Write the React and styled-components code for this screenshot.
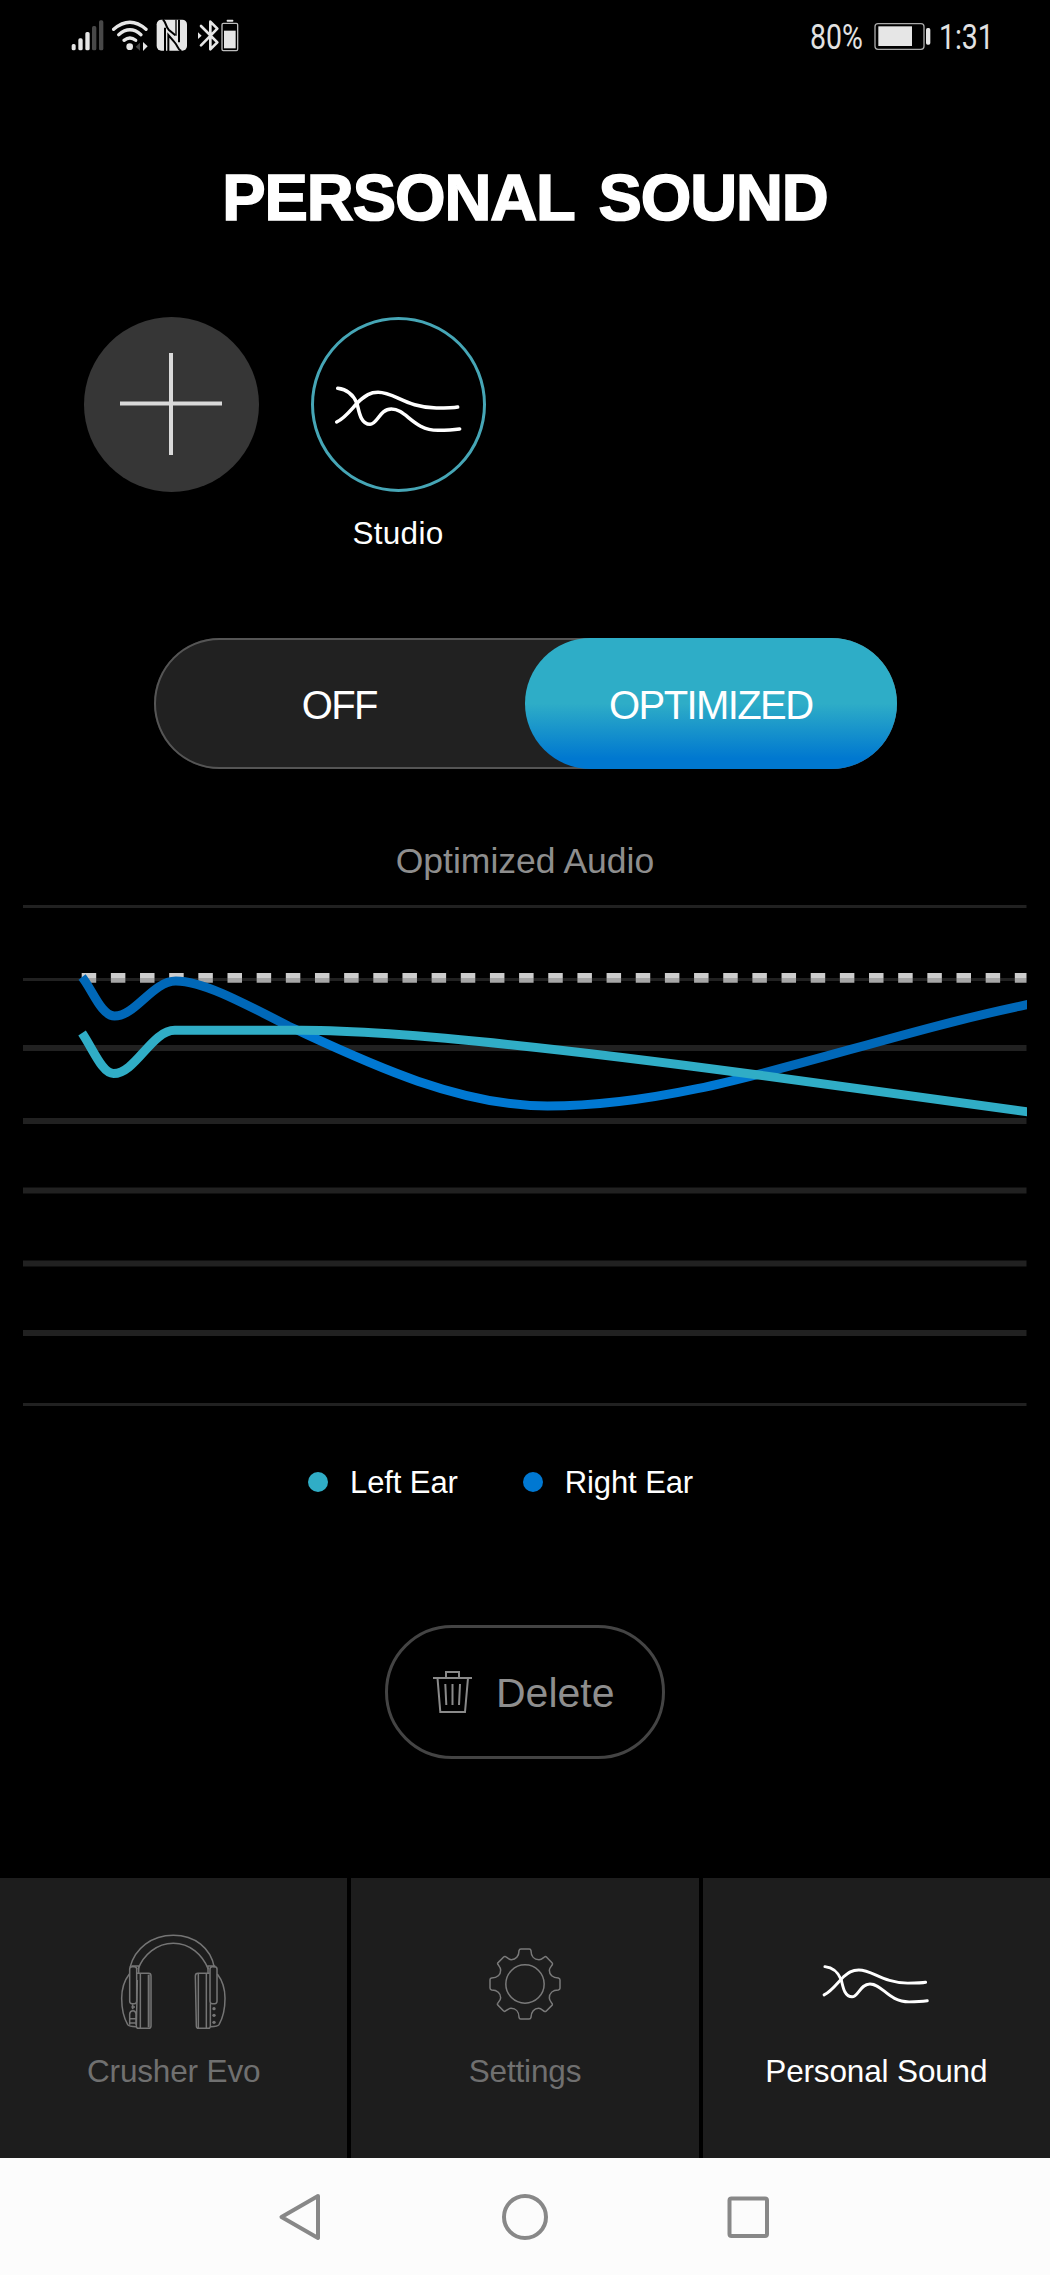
import React, { useState } from "react";
import styled, { createGlobalStyle } from "styled-components";

const GlobalStyle = createGlobalStyle`
  * {
    box-sizing: border-box;
  }
  body {
    margin: 0;
    background: #000;
    font-family: "Liberation Sans", Arial, sans-serif;
  }
  button {
    font-family: inherit;
    padding: 0;
    cursor: pointer;
  }
  svg {
    display: block;
    flex-shrink: 0;
  }
`;

const Screen = styled.div`
  width: 1050px;
  height: 2275px;
  display: flex;
  flex-direction: column;
  background: #000;
  color: #fff;
  overflow: hidden;
`;

const StatusBar = styled.header`
  height: 162px;
  padding: 18px 0 0 70px;
  display: flex;
  align-items: flex-start;
  justify-content: space-between;
`;

const StatusRight = styled.div`
  width: 240px;
  display: flex;
  align-items: flex-start;
  svg {
    margin: 4px 8px 0 0;
  }
`;

const StatusText = styled.span`
  width: ${(props) => props.$width}px;
  font-family: Roboto, sans-serif;
  font-size: 34.7px;
  line-height: 38px;
  color: #e2e2e2;
  white-space: nowrap;
  transform: scaleX(0.82);
  transform-origin: left center;
`;

const Title = styled.h1`
  margin: 0;
  text-align: center;
  font-size: 65px;
  line-height: 72px;
  font-weight: 700;
  letter-spacing: -1.1px;
  word-spacing: 8px;
  -webkit-text-stroke: 1.6px #fff;
`;

const Profiles = styled.section`
  display: flex;
  gap: 52px;
  height: 404px;
  padding: 83px 0 0 83.5px;
`;

const Profile = styled.div`
  display: flex;
  flex-direction: column;
  align-items: center;
  width: 175px;
`;

const ProfileCircle = styled.button`
  width: 175px;
  height: 175px;
  display: flex;
  align-items: center;
  justify-content: center;
  border-radius: 50%;
  border: ${(props) => (props.$selected ? "3px solid #46a6b6" : "none")};
  background: ${(props) => (props.$selected ? "#000" : "#363636")};
  padding: ${(props) => (props.$selected ? "8px 0 0 1px" : "0 1px 1px 0")};
`;

const ProfileName = styled.span`
  margin-top: 23px;
  font-size: 31.5px;
  line-height: 36px;
  letter-spacing: 0.3px;
`;

const Toggle = styled.div`
  width: 743px;
  height: 131px;
  margin: 0 auto;
  display: flex;
  border-radius: 66px;
  background: #212121;
  box-shadow: inset 0 0 0 2px #555;
`;

const ToggleOption = styled.button`
  flex: 1;
  border: none;
  border-radius: 66px;
  padding-top: 3px;
  color: #fff;
  font-size: 40px;
  letter-spacing: -1.6px;
  background: ${(props) =>
    props.$active
      ? "linear-gradient(#2eadc7 0%, #2eadc7 50%, #0078d0 92%, #0078d0 100%)"
      : "transparent"};
`;

const ChartSection = styled.section`
  margin-top: 71px;
  padding: 0 23px;
`;

const ChartTitle = styled.h2`
  margin: 0;
  height: 65px;
  text-align: center;
  font-size: 35.5px;
  line-height: 43px;
  font-weight: 400;
  color: #8e8e8e;
`;

const Legend = styled.div`
  display: flex;
  gap: 65px;
  padding: 59px 0 0 285px;
`;

const LegendItem = styled.div`
  display: flex;
  align-items: center;
  gap: 22px;
  font-size: 31px;
  line-height: 36px;
  letter-spacing: -0.1px;
  &::before {
    content: "";
    width: 20px;
    height: 20px;
    margin-bottom: 3px;
    border-radius: 50%;
    background: ${(props) => props.$color};
  }
`;

const DeleteButton = styled.button`
  width: 280px;
  height: 134px;
  margin: 124px auto 0;
  display: flex;
  align-items: center;
  gap: 24px;
  padding-left: 45px;
  border: 3px solid #444;
  border-radius: 67px;
  background: #000;
  color: #8e8e8e;
  font-size: 41px;
  line-height: 46px;
  span {
    padding-top: 2px;
  }
`;

const TabBar = styled.nav`
  margin-top: auto;
  height: 280px;
  flex-shrink: 0;
  display: grid;
  grid-template-columns: repeat(3, 1fr);
  gap: 4px;
`;

const Tab = styled.button`
  display: flex;
  flex-direction: column;
  align-items: center;
  padding-top: 56px;
  border: none;
  background: #1d1d1d;
  color: ${(props) => (props.$active ? "#fff" : "#707070")};
  font-size: 31.5px;
  line-height: 36px;
  letter-spacing: -0.15px;
`;

const TabIcon = styled.div`
  height: 100px;
  margin-bottom: 19px;
  display: flex;
  align-items: center;
`;

const SystemNav = styled.footer`
  height: 117px;
  flex-shrink: 0;
  display: flex;
  align-items: center;
  justify-content: center;
  gap: 176px;
  background: #fcfcfc;
`;

const SignalIcons = () => (
  <svg width="170" height="35" viewBox="60 55 510 105" fill="#e6e6e6">
    {/* signal */}
    <rect x="65" y="133" width="12" height="19" rx="5" />
    <rect x="85" y="116" width="13" height="36" rx="5" />
    <rect x="106" y="97" width="13" height="55" rx="5" />
    <rect x="126" y="79" width="13" height="73" rx="5" fill="#484848" />
    <rect x="147" y="62" width="13" height="90" rx="5" fill="#484848" />
    {/* wifi */}
    <g fill="none" stroke="#e6e6e6" strokeWidth="10" strokeLinecap="round">
      <path d="M191 89Q240 47 288 89" />
      <path d="M206 105Q240 76 273 105" />
      <path d="M222 122Q240 108 257 122" />
    </g>
    <circle cx="239" cy="141" r="10" />
    <path d="M257 141L270 129V153Z" fill="#444" />
    <path d="M279 127L293 140L279 154Z" />
    {/* nfc */}
    <rect x="320" y="60" width="91" height="93" rx="14" />
    <g fill="none" stroke="#000">
      <path d="M345 154V84" strokeWidth="6" />
      <path d="M338 60C347 62 345 78 356 90L376 107" strokeWidth="6" />
      <path d="M378 60V108" strokeWidth="4" />
      <path d="M387 60V128" strokeWidth="6" />
      <path d="M355 154V106L374 128C384 138 382 150 394 154" strokeWidth="6" />
    </g>
    {/* bluetooth */}
    <path
      d="M453 79L502 128L481 149V66L502 87L453 137"
      fill="none"
      stroke="#e6e6e6"
      strokeWidth="8"
      strokeLinecap="round"
      strokeLinejoin="round"
    />
    <path d="M444 98L455 108L444 118Z" />
    <rect
      x="516"
      y="71"
      width="47"
      height="82"
      rx="4"
      fill="none"
      stroke="#bdbdbd"
      strokeWidth="4"
    />
    <rect x="530" y="60" width="20" height="6" rx="2" />
    <rect x="522" y="93" width="35" height="53" />
  </svg>
);

const BatteryIcon = () => (
  <svg width="57" height="29" viewBox="278 66 171 87" fill="#e6e6e6">
    <rect
      x="281"
      y="71"
      width="147"
      height="77"
      rx="9"
      fill="none"
      stroke="#a8a8a8"
      strokeWidth="4"
    />
    <rect x="291" y="79" width="101" height="59" />
    <rect x="434" y="84" width="13" height="50" rx="5" />
  </svg>
);

const PlusIcon = () => (
  <svg width="102" height="102" viewBox="0 0 102 102" fill="#dadada">
    <rect x="0" y="48.5" width="102" height="4" />
    <rect x="49" y="0" width="4" height="102" />
  </svg>
);

const WavesIcon = ({ width = 131.7, strokeWidth = 10.5 }) => (
  <svg
    width={width}
    height={(width * 150) / 395}
    viewBox="820 250 395 150"
    fill="none"
    stroke="#fff"
    strokeWidth={strokeWidth}
    strokeLinecap="round"
  >
    <path d="M834 263C862 266 882 285 892 309C898 330 902 371 931 371C953 371 960 325 995 325C1040 325 1060 389 1135 389C1165 389 1180 388 1200 385" />
    <path d="M831 364C860 350 880 318 900 300C918 285 930 275 955 275C1005 275 1040 321 1130 322C1160 322 1180 322 1194 319" />
  </svg>
);

const TrashIcon = () => (
  <svg
    width="39"
    height="42"
    viewBox="0 0 39 42"
    fill="none"
    stroke="#8a8a8a"
    strokeWidth="2"
  >
    <path d="M0 7H39M13 7V1H26V7" />
    <path d="M4.5 7L7.3 41H32L35 7" />
    <path d="M12.3 13L13.3 34M19.5 13V34M27 13L26 34" />
  </svg>
);

const HeadphonesIcon = () => (
  <svg
    width="106.7"
    height="100"
    viewBox="360 222 320 300"
    fill="none"
    stroke="#757575"
    strokeWidth="4.5"
  >
    <path d="M390 322C405 265 455 226 520 226S632 265 643 322" />
    <path d="M414 328C430 285 470 250 520 250S608 285 625 328" />
    <path d="M394 318H416V340M646 318H624V340" />
    <rect x="389" y="320" width="21" height="111" rx="7" />
    <rect x="630" y="320" width="21" height="111" rx="7" />
    {/* ear cups */}
    <path d="M388 342C371 364 365 386 365 415C365 450 372 475 383 494Q387 500 408 500" />
    <path d="M652 342C669 364 675 386 675 415C675 450 668 475 657 494Q653 500 632 500" />
    <path d="M411 340H446Q453 340 453 348V498Q453 505 446 505H415Q409 505 409 498L412 360" />
    <path d="M629 340H594Q586 340 586 348L589 498Q589 505 596 505H625Q631 505 631 498V430" />
    <path d="M421 341V504M595 341V504M619 341V504" />
    <path d="M446 344V502" strokeWidth="6" />
    {/* buttons */}
    <path d="M398 433V448M394 441H405" strokeWidth="5" />
    <path d="M389 494V462Q390 452 399 452Q407 452 408 462V494M389 476H408M391 489H408" />
    <g fill="#757575" stroke="none">
      <circle cx="642" cy="446" r="5" />
      <circle cx="642" cy="466" r="5" />
      <circle cx="642" cy="487" r="5" />
    </g>
  </svg>
);

const GearIcon = () => (
  <svg
    width="74"
    height="74"
    viewBox="-111 -111 222 222"
    fill="none"
    stroke="#7a7a7a"
    strokeWidth="4.5"
  >
    <circle r="57.5" />
    {[0, 90, 180, 270].map((angle) => (
      <path
        key={angle}
        transform={`rotate(${angle})`}
        d="M0 -105H13Q17 -105 18 -100C18 -83 28 -73 42 -73C50 -73 55 -79 60 -82Q63 -83 65 -80L81 -64Q84 -61 82 -58C79 -53 73 -48 73 -41C73 -28 83 -18 100 -18Q105 -17 105 -12V0"
      />
    ))}
  </svg>
);

// vertical position and thickness of every grid line
const gridLines = [
  [1.5, 3],
  [74.5, 3],
  [143, 6],
  [216, 6],
  [285.5, 6],
  [358.5, 6],
  [428, 6],
  [499.5, 3],
];

const Chart = () => (
  <svg width="1003.5" height="501" viewBox="0 0 1003.5 501" fill="none">
    <defs>
      <linearGradient
        id="rightEar"
        gradientUnits="userSpaceOnUse"
        x1="0"
        y1="0"
        x2="1000"
        y2="0"
      >
        <stop offset="0.29" stopColor="#0068b8" />
        <stop offset="0.3" stopColor="#0078d2" />
        <stop offset="0.75" stopColor="#0078d2" />
        <stop offset="0.76" stopColor="#0068b8" />
      </linearGradient>
    </defs>
    {gridLines.map(([y, size]) => (
      <path key={y} d={`M0 ${y}H1003.5`} stroke="#212121" strokeWidth={size} />
    ))}
    <g strokeDasharray="14.5 14.66">
      <path d="M58.7 70.5H1003.5" stroke="#cdcdcd" strokeWidth="5" />
      <path d="M58.7 75.3H1003.5" stroke="#a6a6a6" strokeWidth="4.8" />
    </g>
    <g
      transform="translate(-23 -905) scale(1.0045 1)"
      strokeWidth="9"
    >
      <path
        stroke="url(#rightEar)"
        d="M81.7 977C92 990 101 1016 114 1016C135 1016 152 981 175 981C200 981 235 999 287 1026C350 1055 450 1106 545 1106C700 1106 850 1040 1028 1003.5"
      />
      <path
        stroke="#30adc6"
        d="M81.7 1033C93 1050 102 1073.5 113 1073.5C135 1073.5 151 1030.3 174 1030.3H300C400 1030.3 600 1054 755 1075C850 1088 940 1101 1028 1112.5"
      />
    </g>
  </svg>
);

const tabs = [
  { name: "Crusher Evo", icon: <HeadphonesIcon /> },
  { name: "Settings", icon: <GearIcon /> },
  {
    name: "Personal Sound",
    icon: <WavesIcon width={110.5} strokeWidth={10.5} />,
  },
];

const App = () => {
  const [mode, setMode] = useState("OPTIMIZED");
  const [tab, setTab] = useState("Personal Sound");

  return (
    <>
      <GlobalStyle />
      <Screen>
        <StatusBar>
          <SignalIcons />
          <StatusRight>
            <StatusText $width={64}>80%</StatusText>
            <BatteryIcon />
            <StatusText $width={70}>1:31</StatusText>
          </StatusRight>
        </StatusBar>

        <Title>PERSONAL SOUND</Title>

        <Profiles>
          <Profile>
            <ProfileCircle aria-label="Add profile">
              <PlusIcon />
            </ProfileCircle>
          </Profile>
          <Profile>
            <ProfileCircle $selected aria-label="Studio profile">
              <WavesIcon />
            </ProfileCircle>
            <ProfileName>Studio</ProfileName>
          </Profile>
        </Profiles>

        <Toggle>
          {["OFF", "OPTIMIZED"].map((item) => (
            <ToggleOption
              key={item}
              $active={mode === item}
              onClick={() => setMode(item)}
            >
              {item}
            </ToggleOption>
          ))}
        </Toggle>

        <ChartSection>
          <ChartTitle>Optimized Audio</ChartTitle>
          <Chart />
          <Legend>
            <LegendItem $color="#30adc6">Left Ear</LegendItem>
            <LegendItem $color="#0078d2">Right Ear</LegendItem>
          </Legend>
        </ChartSection>

        <DeleteButton>
          <TrashIcon />
          <span>Delete</span>
        </DeleteButton>

        <TabBar>
          {tabs.map((item) => (
            <Tab
              key={item.name}
              $active={tab === item.name}
              onClick={() => setTab(item.name)}
            >
              <TabIcon>{item.icon}</TabIcon>
              {item.name}
            </Tab>
          ))}
        </TabBar>

        <SystemNav>
          <svg width="48" height="48" fill="none" stroke="#888" strokeWidth="4">
            <path d="M41 3L4.5 24L41 45Z" strokeLinejoin="round" />
          </svg>
          <svg width="48" height="48" fill="none" stroke="#888" strokeWidth="4">
            <circle cx="24" cy="24" r="21" />
          </svg>
          <svg width="48" height="48" fill="none" stroke="#888" strokeWidth="4">
            <rect x="4.5" y="5.5" width="37.5" height="37.5" rx="2" />
          </svg>
        </SystemNav>
      </Screen>
    </>
  );
};

export default App;
